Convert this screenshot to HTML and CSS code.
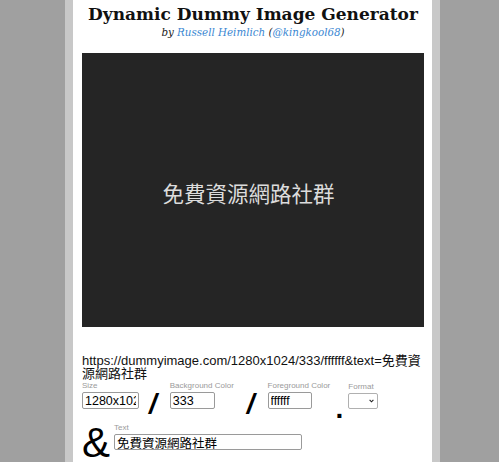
FILE: index.html
```html
<!DOCTYPE html>
<html lang="en">
<head>
<meta charset="utf-8">
<title>Dynamic Dummy Image Generator</title>
<link rel="stylesheet" href="styles.css">
</head>
<body>
<div class="page">
  <header class="head">
    <h1 class="title">Dynamic Dummy Image Generator</h1>
    <p class="byline">by <a href="#">Russell Heimlich</a> (<a href="#">@kingkool68</a>)</p>
  </header>
  <div class="preview"><span class="preview-text">免費資源網路社群</span></div>
  <p class="url">https://dummyimage.com/1280x1024/333/ffffff&amp;text=免費資源網路社群</p>
  <form class="gen">
    <div class="row">
      <label class="field field-size"><span class="lbl">Size</span><input class="in in-size" type="text" value="1280x1024"></label>
      <span class="sep">/</span>
      <label class="field field-bg"><span class="lbl">Background Color</span><input class="in in-bg" type="text" value="333"></label>
      <span class="sep">/</span>
      <label class="field field-fg"><span class="lbl">Foreground Color</span><input class="in in-fg" type="text" value="ffffff"></label>
      <span class="sep dot">.</span>
      <label class="field"><span class="lbl">Format</span>
        <span class="select-wrap">
          <select class="in in-fmt"><option></option></select>
          <svg class="chev" width="5" height="4" viewBox="0 0 5 4"><path d="M0.6 0.8 L2.5 2.8 L4.4 0.8" fill="none" stroke="#222" stroke-width="1.1"/></svg>
        </span>
      </label>
    </div>
    <div class="row row-text">
      <span class="amp">&amp;</span>
      <label class="field"><span class="lbl">Text</span><input class="in in-text" type="text" value="免費資源網路社群"></label>
    </div>
  </form>
</div>
</body>
</html>
```

FILE: styles.css
```css
html, body {
  margin: 0;
  padding: 0;
}
body {
  background: #a0a0a0;
  font-family: "Liberation Sans", Arial, "Noto Sans CJK TC", sans-serif;
  color: #111;
}
.page {
  box-sizing: border-box;
  width: 375px;
  min-height: 462px;
  margin-left: 65px;
  padding: 0 8px 0 9px;
  background: #fff;
  border-left: 8px solid #c8c8c8;
  border-right: 8px solid #c8c8c8;
}
.head {
  text-align: center;
  padding-top: 4px;
}
.title {
  margin: 0;
  font-family: "DejaVu Serif", Georgia, serif;
  font-weight: bold;
  font-size: 17px;
  line-height: 20px;
  color: #111;
}
.byline {
  margin: 0;
  font-family: "DejaVu Serif", Georgia, serif;
  font-style: italic;
  font-size: 10.3px;
  line-height: 16px;
  color: #222;
}
.byline a {
  color: #3a87d2;
  text-decoration: none;
}
.preview {
  margin-top: 13px;
  height: 274px;
  background: #252525;
  display: flex;
  align-items: center;
  justify-content: center;
  padding: 5px 9px 0 0;
  box-sizing: border-box;
}
.preview-text {
  font-family: "Noto Sans CJK TC", sans-serif;
  font-size: 21.5px;
  color: #dcdcdc;
}
.url {
  margin: 27px 0 0;
  font-size: 13px;
  line-height: 13px;
  color: #111;
  font-family: "Liberation Sans", Arial, "Noto Sans CJK TC", sans-serif;
}
.gen {
  margin: 1px 0 0;
}
.row {
  display: flex;
  align-items: flex-end;
}
.field {
  display: flex;
  flex-direction: column;
  align-items: flex-start;
}
.field-size { width: 57px; }
.field-bg { width: 67px; }
.field-fg { width: 63px; }
.lbl {
  font-size: 8px;
  line-height: 10px;
  color: #9a9a9a;
  padding-bottom: 1px;
  white-space: nowrap;
}
.in {
  box-sizing: border-box;
  height: 17px;
  margin: 0;
  padding: 0 2px;
  border: 1px solid #9a9a9a;
  border-radius: 2px;
  font-family: "Liberation Sans", Arial, "Noto Sans CJK TC", sans-serif;
  font-size: 12.5px;
  color: #000;
  background: #fff;
}
.in-size { width: 57px; }
.in-bg { width: 45px; }
.in-fg { width: 44px; font-size: 12px; }
.select-wrap {
  position: relative;
  display: block;
  width: 30px;
  height: 16px;
}
.in-fmt {
  -webkit-appearance: none;
  appearance: none;
  width: 30px;
  height: 16px;
  padding: 0;
  border-color: #b0b0b0;
  display: block;
}
.chev {
  position: absolute;
  right: 4px;
  top: 6px;
  pointer-events: none;
}
.in-text { width: 188px; height: 16px; font-size: 12.5px; }
.sep {
  font-size: 28px;
  font-weight: bold;
  font-style: italic;
  line-height: 28px;
  margin: 0 13px -9px 10px;
  color: #000;
}
.dot {
  font-style: normal;
  margin: 0 5px -14px 5px;
}
.row-text {
  margin-top: 14px;
}
.amp {
  font-size: 42px;
  line-height: 34px;
  margin: 0 4px -10px 0;
  color: #000;
}
```
